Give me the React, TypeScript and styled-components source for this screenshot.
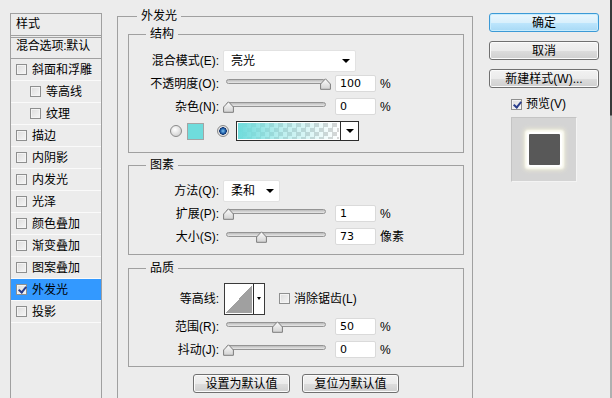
import React from 'react';
import styled, { createGlobalStyle } from 'styled-components';

const GlobalStyle = createGlobalStyle`
  html, body {
    margin: 0;
    padding: 0;
    background: #ececec;
  }
  body {
    font-family: "Liberation Sans", "Noto Sans CJK SC", sans-serif;
    font-size: 12px;
    color: #000;
  }
`;

const styleItems = [
  { name: '斜面和浮雕' },
  { name: '等高线', indent: true },
  { name: '纹理', indent: true },
  { name: '描边' },
  { name: '内阴影' },
  { name: '内发光' },
  { name: '光泽' },
  { name: '颜色叠加' },
  { name: '渐变叠加' },
  { name: '图案叠加' },
  { name: '外发光', active: true },
  { name: '投影' },
];

const Slider = ({ pos }: { pos: number }) => (
  <SliderBox>
    <Track />
    <Thumb style={{ left: `${Math.round(pos * 97)}px` }}>
      <svg width="11" height="12" viewBox="0 0 11 12">
        <defs>
          <linearGradient id="thumbFill" x1="0" y1="0" x2="0" y2="1">
            <stop offset="0" stopColor="#fdfdfd" />
            <stop offset="1" stopColor="#d2d2d2" />
          </linearGradient>
        </defs>
        <path
          d="M5.5 0.8 L10.4 6 V11.3 H0.6 V6 Z"
          fill="url(#thumbFill)"
          stroke="#7c7c7c"
          strokeLinejoin="round"
        />
      </svg>
    </Thumb>
  </SliderBox>
);

const SliderRow = ({
  label,
  pos,
  value,
  unit,
}: {
  label: string;
  pos: number;
  value: string;
  unit: string;
}) => (
  <FieldRow>
    <Label>{label}</Label>
    <Slider pos={pos} />
    <NumInput>{value}</NumInput>
    <Unit>{unit}</Unit>
  </FieldRow>
);

export default function App() {
  return (
    <>
      <GlobalStyle />
      <Dialog>
        <StylePanel>
          <PanelHeader>样式</PanelHeader>
          <BlendRow>混合选项:默认</BlendRow>
          {styleItems.map((item) => (
            <StyleItem key={item.name} $active={item.active} $indent={item.indent}>
              <Checkbox $checked={item.active} />
              <span>{item.name}</span>
            </StyleItem>
          ))}
        </StylePanel>

        <OuterGroup>
          <Legend $offset={19}>外发光</Legend>
          <OuterBody>
            <Group>
              <Legend $offset={17}>结构</Legend>
              <GroupBody $top={8} $bottom={8}>
                <FieldRow>
                  <Label>混合模式(E):</Label>
                  <Select $w={133}>
                    <span>亮光</span>
                    <Arrow />
                  </Select>
                </FieldRow>
                <SliderRow label="不透明度(O):" pos={1} value="100" unit="%" />
                <SliderRow label="杂色(N):" pos={0} value="0" unit="%" />
                <ColorRow>
                  <Radio />
                  <Swatch />
                  <Radio $checked />
                  <GradientPicker>
                    <GradientBar />
                    <DropPart $w={17}>
                      <Arrow />
                    </DropPart>
                  </GradientPicker>
                </ColorRow>
              </GroupBody>
            </Group>

            <Group $gap={5}>
              <Legend $offset={17}>图素</Legend>
              <GroupBody $top={7} $bottom={6}>
                <FieldRow>
                  <Label>方法(Q):</Label>
                  <Select $w={57}>
                    <span>柔和</span>
                    <Arrow />
                  </Select>
                </FieldRow>
                <SliderRow label="扩展(P):" pos={0} value="1" unit="%" />
                <SliderRow label="大小(S):" pos={0.34} value="73" unit="像素" />
              </GroupBody>
            </Group>

            <Group $gap={6}>
              <Legend $offset={17}>品质</Legend>
              <GroupBody $top={7} $bottom={5}>
                <ContourRow>
                  <Label>等高线:</Label>
                  <ContourPicker>
                    <ContourCurve />
                    <DropPart $w={10}>
                      <SmallArrow />
                    </DropPart>
                  </ContourPicker>
                  <CheckLabel>
                    <Checkbox />
                    <span>消除锯齿(L)</span>
                  </CheckLabel>
                </ContourRow>
                <SliderRow label="范围(R):" pos={0.5} value="50" unit="%" />
                <SliderRow label="抖动(J):" pos={0} value="0" unit="%" />
              </GroupBody>
            </Group>

            <ButtonBar>
              <Button $w={97}>设置为默认值</Button>
              <Button $w={97}>复位为默认值</Button>
            </ButtonBar>
          </OuterBody>
        </OuterGroup>

        <SideColumn>
          <Button $w={110} $primary>确定</Button>
          <Button $w={110}>取消</Button>
          <Button $w={110}>新建样式(W)...</Button>
          <PreviewRow>
            <Checkbox $checked />
            <span>预览(V)</span>
          </PreviewRow>
          <PreviewBox>
            <PreviewSquare />
          </PreviewBox>
        </SideColumn>
        <WindowEdge />
      </Dialog>
    </>
  );
}

const Dialog = styled.div`
  width: 612px;
  height: 398px;
  display: flex;
  align-items: stretch;
  overflow: hidden;
  background: #ececec;
  line-height: 14px;
`;

/* left list */

const StylePanel = styled.div`
  margin: 13px 0 0 10px;
  width: 90px;
  flex-shrink: 0;
  border: 1px solid #a0a0a0;
  border-bottom: none;
`;

const PanelHeader = styled.div`
  height: 24px;
  padding: 3px 0 0 5px;
  box-sizing: border-box;
  border-bottom: 3px double #a0a0a0;
`;

const BlendRow = styled.div`
  height: 21px;
  padding: 1px 0 0 5px;
  box-sizing: border-box;
  border-bottom: 1px solid #a0a0a0;
  white-space: nowrap;
  letter-spacing: -0.2px;
`;

const StyleItem = styled.div<{ $active?: boolean; $indent?: boolean }>`
  height: 22px;
  box-sizing: border-box;
  display: flex;
  align-items: center;
  gap: 5px;
  padding-left: ${(p) => (p.$indent ? 19 : 5)}px;
  border-bottom: 1px solid #fafafa;
  background: ${(p) => (p.$active ? '#3399ff' : 'transparent')};
  white-space: nowrap;
`;

const Checkbox = styled.span<{ $checked?: boolean }>`
  width: 11px;
  height: 11px;
  flex-shrink: 0;
  box-sizing: border-box;
  border: 1px solid #8e8f8f;
  background: linear-gradient(135deg, #dcdcdc, #f6f6f6);
  box-shadow: inset 0 0 0 1px #f4f4f4;
  position: relative;

  &::after {
    content: '';
    display: ${(p) => (p.$checked ? 'block' : 'none')};
    position: absolute;
    left: 3px;
    top: 0px;
    width: 3px;
    height: 6px;
    border: solid #2a3e8c;
    border-width: 0 2px 2px 0;
    transform: rotate(40deg);
  }
`;

/* fieldsets */

const OuterGroup = styled.fieldset`
  margin: 9px 0 0 15px;
  padding: 0;
  width: 356px;
  box-sizing: border-box;
  min-width: 0;
  flex-shrink: 0;
  border: 1px solid #a0a0a0;
  border-bottom: none;
`;

const Legend = styled.legend<{ $offset: number }>`
  margin-left: ${(p) => p.$offset}px;
  padding: 0 4px;
  line-height: 14px;
  font-size: 12px;
`;

const OuterBody = styled.div`
  padding: 4px 0 0 10px;
`;

const Group = styled.fieldset<{ $gap?: number }>`
  margin: ${(p) => p.$gap ?? 0}px 0 0 0;
  padding: 0;
  width: 336px;
  box-sizing: border-box;
  min-width: 0;
  border: 1px solid #a0a0a0;
`;

const GroupBody = styled.div<{ $top: number; $bottom: number }>`
  padding: ${(p) => p.$top}px 0 ${(p) => p.$bottom}px 0;
`;

const FieldRow = styled.div`
  height: 23px;
  display: flex;
  align-items: center;
`;

const ContourRow = styled(FieldRow)`
  height: 33px;
`;

const Label = styled.span`
  width: 90px;
  margin-right: 4px;
  text-align: right;
  white-space: nowrap;
  flex-shrink: 0;
`;

const Select = styled.div<{ $w: number }>`
  width: ${(p) => p.$w}px;
  height: 22px;
  box-sizing: border-box;
  display: flex;
  align-items: center;
  justify-content: space-between;
  padding: 0 5px 0 7px;
  background: #fff;
  border: 1px solid #e2e2e2;
  border-radius: 2px;
`;

const Arrow = styled.span`
  width: 0;
  height: 0;
  border-left: 4px solid transparent;
  border-right: 4px solid transparent;
  border-top: 4px solid #000;
`;

const SmallArrow = styled.span`
  width: 0;
  height: 0;
  border-left: 2.5px solid transparent;
  border-right: 2.5px solid transparent;
  border-top: 3px solid #000;
`;

const SliderBox = styled.div`
  position: relative;
  width: 108px;
  height: 14px;
  margin-top: 2px;
  flex-shrink: 0;
`;

const Track = styled.div`
  position: absolute;
  left: 3px;
  right: 5px;
  top: 1px;
  height: 5px;
  box-sizing: border-box;
  border: 1px solid #949494;
  border-radius: 3px;
  background: linear-gradient(#bcbcbc, #e8e8e8);
`;

const Thumb = styled.div`
  position: absolute;
  top: 0;
  width: 11px;
  height: 12px;
  display: flex;
`;

const NumInput = styled.div`
  width: 41px;
  height: 17px;
  margin-left: 4px;
  box-sizing: border-box;
  padding: 1px 0 0 4px;
  background: #fff;
  border: 1px solid #dadada;
  border-radius: 2px;
  line-height: 14px;
  font-family: "DejaVu Sans", "Liberation Sans", sans-serif;
  font-size: 11px;
`;

const Unit = styled.span`
  margin-left: 4px;
  white-space: nowrap;
`;

/* colour row */

const ColorRow = styled.div`
  height: 26px;
  display: flex;
  align-items: center;
  padding-left: 41px;
`;

const Radio = styled.span<{ $checked?: boolean }>`
  width: 12px;
  height: 12px;
  box-sizing: border-box;
  border-radius: 50%;
  border: 1px solid #8a8a8a;
  background: ${(p) =>
    p.$checked
      ? 'radial-gradient(circle at 50% 50%, #7fc3f2 0, #1f5fa8 2.5px, #0d2f6a 3.5px, #e8e8e8 4px, #cfcfcf 100%)'
      : 'radial-gradient(circle at 40% 35%, #ffffff 0, #e8e8e8 40%, #c4c4c4 100%)'};
  margin-right: ${(p) => (p.$checked ? 7 : 5)}px;
  flex-shrink: 0;
`;

const Swatch = styled.span`
  width: 17px;
  height: 17px;
  box-sizing: border-box;
  border: 1px solid #a4a4a4;
  background: #6fdcdc;
  margin-right: 13px;
  flex-shrink: 0;
`;

const GradientPicker = styled.div`
  width: 123px;
  height: 20px;
  box-sizing: border-box;
  display: flex;
  border: 1px solid #2c2c2c;
  background: #fff;
`;

const GradientBar = styled.div`
  flex: 1;
  border: 1px solid #fff;
  background:
    linear-gradient(to right, #6fdcdc 0%, rgba(111, 220, 220, 0.45) 45%, rgba(111, 220, 220, 0) 100%),
    repeating-conic-gradient(#d6d6d6 0% 25%, #ffffff 0% 50%) 0 0 / 9px 9px;
`;

const DropPart = styled.div<{ $w: number }>`
  width: ${(p) => p.$w}px;
  flex-shrink: 0;
  display: flex;
  align-items: center;
  justify-content: center;
  border-left: 1px solid #2c2c2c;
  background: #fff;
`;

/* contour */

const ContourPicker = styled.div`
  width: 41px;
  height: 32px;
  box-sizing: border-box;
  display: flex;
  border: 1px solid #3a3a3a;
  background: #fff;
  margin-left: 1px;
`;

const ContourCurve = styled.div`
  flex: 1;
  border: 1px solid #fff;
  background: linear-gradient(to bottom right, #ffffff 50%, #a0a0a0 50%);
`;

const CheckLabel = styled.label`
  display: flex;
  align-items: center;
  gap: 4px;
  margin-left: 14px;
  white-space: nowrap;
`;

/* buttons */

const ButtonBar = styled.div`
  display: flex;
  justify-content: center;
  gap: 12px;
  padding: 7px 8px 0 0;
`;

const Button = styled.div<{ $w: number; $primary?: boolean }>`
  width: ${(p) => p.$w}px;
  height: 19px;
  box-sizing: border-box;
  display: flex;
  align-items: center;
  justify-content: center;
  border: 1px solid ${(p) => (p.$primary ? '#3c9ad6' : '#707070')};
  border-radius: 3px;
  background: ${(p) =>
    p.$primary
      ? 'linear-gradient(#eaf6fd 0%, #d9f0fc 50%, #bee6fd 51%, #a7d9f5 100%)'
      : 'linear-gradient(#f2f2f2 0%, #ebebeb 50%, #dddddd 51%, #cfcfcf 100%)'};
  box-shadow: inset 0 0 0 1px ${(p) => (p.$primary ? '#c8ecfd' : '#fbfbfb')};
  white-space: nowrap;
  flex-shrink: 0;
`;

/* right column */

const SideColumn = styled.div`
  width: 110px;
  margin: 13px 0 0 16px;
  display: flex;
  flex-direction: column;
  gap: 9px;
  flex-shrink: 0;
`;

const PreviewRow = styled.div`
  display: flex;
  align-items: center;
  gap: 4px;
  padding-left: 22px;
  margin-top: 0;
  height: 14px;
`;

const PreviewBox = styled.div`
  width: 66px;
  height: 65px;
  margin: -3px 0 0 22px;
  box-sizing: border-box;
  display: flex;
  align-items: center;
  justify-content: center;
  background: #d4d4d4;
  border: 1px solid #c4c4c4;
  border-right-color: #f4f4f4;
  border-bottom-color: #f4f4f4;
`;

const PreviewSquare = styled.div`
  width: 31px;
  height: 31px;
  background: #585858;
  border-radius: 1px;
  box-shadow:
    0 0 0 2px #ffffff,
    0 0 2px 4px #fbfbf4,
    0 0 5px 5px rgba(246, 244, 214, 0.8);
`;

const WindowEdge = styled.div`
  width: 2px;
  margin-left: 11px;
  background: linear-gradient(#3a3a3a 0, #3a3a3a 115px, #b0b0b0 116px, #b0b0b0 100%);
  flex-shrink: 0;
`;
